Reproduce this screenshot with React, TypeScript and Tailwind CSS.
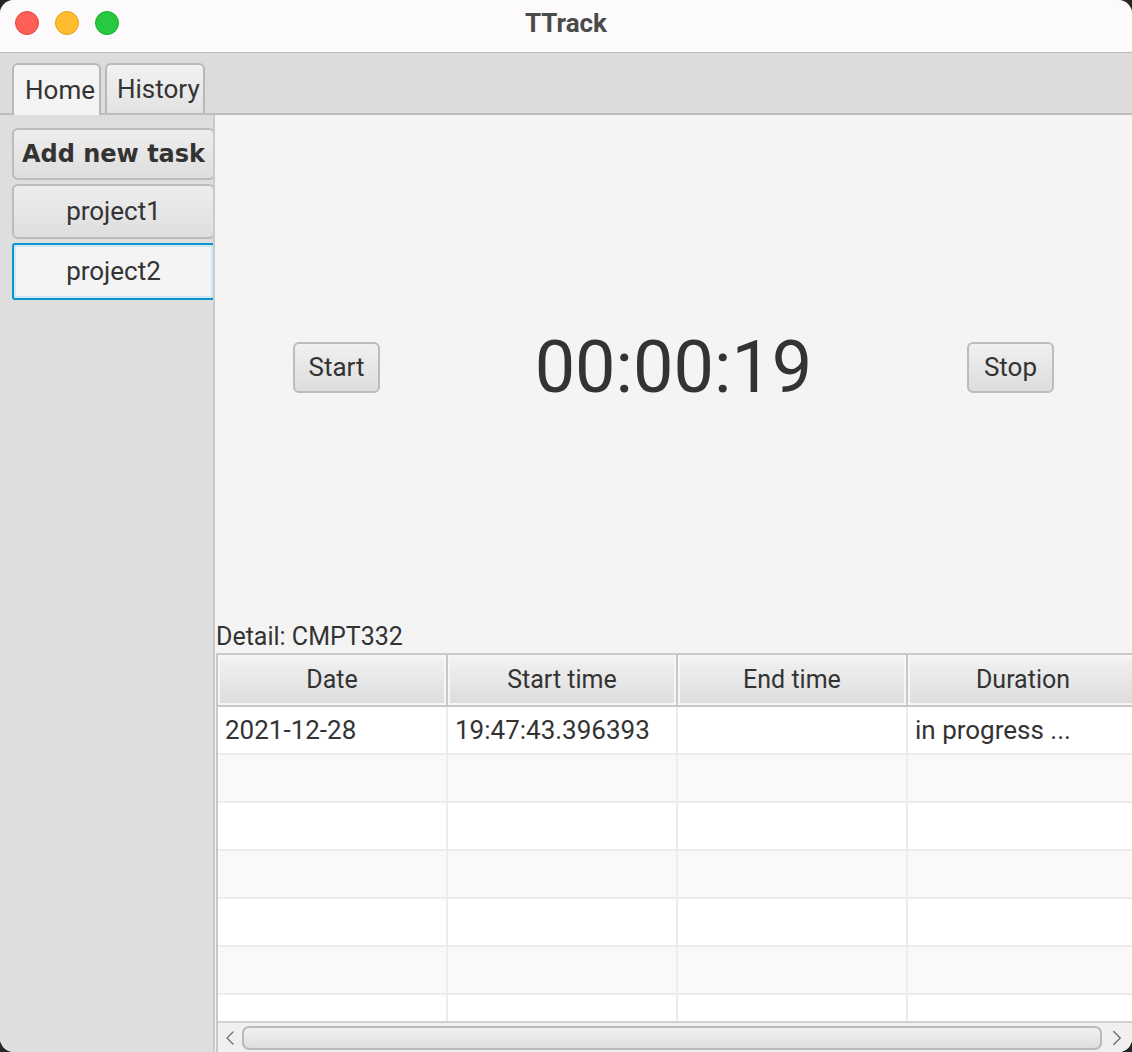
import { ChevronLeft, ChevronRight } from 'lucide-react'

const rows = [
  { date: '2021-12-28', start: '19:47:43.396393', end: '', duration: 'in progress ...' },
  { date: '', start: '', end: '', duration: '' },
  { date: '', start: '', end: '', duration: '' },
  { date: '', start: '', end: '', duration: '' },
  { date: '', start: '', end: '', duration: '' },
  { date: '', start: '', end: '', duration: '' },
  { date: '', start: '', end: '', duration: '' },
]

const columns = ['Date', 'Start time', 'End time', 'Duration']

export default function App() {
  return (
    <div className="w-[1132px] h-[1052px] bg-[#262626]" style={{ fontFamily: 'Roboto, "Liberation Sans", sans-serif' }}>
      <div className="w-full h-full rounded-[14px] overflow-hidden flex flex-col bg-[#dcdcdc] text-[#333]">

        {/* Title bar */}
        <div className="relative h-[53px] shrink-0 bg-[#fcfafb] border-b border-[#b9b9b9] flex items-center justify-center">
          <div className="absolute left-[15px] top-[11px] flex gap-4">
            <span className="w-6 h-6 rounded-full bg-[#fe5f57] border border-[#e2463f]" />
            <span className="w-6 h-6 rounded-full bg-[#febc2e] border border-[#e1a116]" />
            <span className="w-6 h-6 rounded-full bg-[#28c840] border border-[#17ad2b]" />
          </div>
          <span className="text-[26px] font-bold text-[#4a4a4a] leading-none -mt-[6px]">TTrack</span>
        </div>

        {/* Tab header */}
        <div className="h-[62px] shrink-0 bg-[#dcdcdc] border-b-2 border-[#bdbdbd] flex items-end pl-3 gap-1">
          <div className="w-[89px] h-[52px] -mb-[2px] rounded-t-[6px] border-2 border-b-0 border-[#b8b8b8] bg-[#f4f4f4] flex items-center pl-[11px] text-[26px]">
            Home
          </div>
          <div className="w-[100px] h-[50px] rounded-t-[6px] border-2 border-b-0 border-[#b8b8b8] bg-gradient-to-b from-[#f2f2f2] to-[#e2e2e2] flex items-center pl-[10px] text-[26px] overflow-hidden whitespace-nowrap">
            History
          </div>
        </div>

        {/* Body */}
        <div className="flex-1 flex min-h-0">

          {/* Sidebar */}
          <div className="w-[215px] shrink-0 bg-[#dedede] border-r-2 border-[#cbcbcb] overflow-hidden pt-[13px] pl-3 flex flex-col gap-1">
            <div className="w-[203px] h-[52px] shrink-0 rounded-[6px] border-2 border-[#bcbcbc] bg-gradient-to-b from-[#eeeeee] to-[#dedede] flex items-center justify-center text-[24px] font-bold whitespace-nowrap" style={{ fontFamily: '"DejaVu Sans", Verdana, sans-serif' }}>
              Add new task
            </div>
            <div className="w-[203px] h-[55px] shrink-0 rounded-[6px] border-2 border-[#bcbcbc] bg-gradient-to-b from-[#eeeeee] to-[#dedede] flex items-center justify-center text-[26px]">
              project1
            </div>
            <div className="w-[203px] h-[57px] shrink-0 rounded-[3px] border-2 border-[#0b96cf] bg-[#f4f4f4] flex items-center justify-center text-[26px] shadow-[inset_0_0_0_2px_#cfe8f3]">
              project2
            </div>
          </div>

          {/* Main */}
          <div className="flex-1 min-w-0 bg-[#f4f4f4] flex flex-col">
            <div className="flex-1 flex items-center justify-between px-[78px]">
              <button className="w-[87px] h-[51px] rounded-[6px] border-2 border-[#bcbcbc] bg-gradient-to-b from-[#f0f0f0] to-[#dddddd] text-[26px]">
                Start
              </button>
              <span className="text-[72px] leading-none">00:00:19</span>
              <button className="w-[87px] h-[51px] rounded-[6px] border-2 border-[#bcbcbc] bg-gradient-to-b from-[#f0f0f0] to-[#dddddd] text-[26px]">
                Stop
              </button>
            </div>

            <div className="h-[33px] shrink-0 flex items-end pl-[1px] text-[25px] leading-[32px]">Detail: CMPT332</div>

            {/* Table */}
            <div className="h-[399px] shrink-0 ml-[1px] border-l-2 border-t-2 border-[#c8c8c8] bg-white flex flex-col overflow-hidden">
              <div className="flex-1 overflow-hidden">
                <div className="w-[920px]">
                  <div className="grid grid-cols-[230px_230px_230px_230px] h-[52px] border-b-2 border-[#c8c8c8]">
                    {columns.map((c, i) => (
                      <div
                        key={c}
                        className={`flex items-center justify-center text-[25px] bg-gradient-to-b from-[#f3f3f3] to-[#dcdcdc] shadow-[inset_0_0_0_2px_#f6f6f6] ${i < 3 ? 'border-r-2 border-[#c8c8c8]' : ''}`}
                      >
                        {c}
                      </div>
                    ))}
                  </div>
                  {rows.map((r, ri) => (
                    <div
                      key={ri}
                      className={`grid grid-cols-[230px_230px_230px_230px] h-[48px] border-b-2 border-[#ececec] ${ri % 2 === 0 ? 'bg-white' : 'bg-[#f9f9f9]'}`}
                    >
                      {[r.date, r.start, r.end, r.duration].map((v, ci) => (
                        <div
                          key={ci}
                          className={`flex items-center pl-[7px] text-[26px] whitespace-nowrap ${ci < 3 ? 'border-r-2 border-[#ececec]' : ''}`}
                        >
                          {v}
                        </div>
                      ))}
                    </div>
                  ))}
                </div>
              </div>

              {/* Horizontal scrollbar */}
              <div className="h-[31px] shrink-0 border-t-2 border-[#d0d0d0] bg-[#f0f0f0] flex items-center">
                <div className="w-[24px] flex justify-center text-[#6e6e6e]">
                  <ChevronLeft size={26} strokeWidth={1.3} />
                </div>
                <div className="flex-1 h-[24px] rounded-[7px] border-2 border-[#bababa] bg-gradient-to-b from-[#f1f1f1] to-[#dedede]" />
                <div className="w-[30px] flex justify-center text-[#6e6e6e]">
                  <ChevronRight size={26} strokeWidth={1.3} />
                </div>
              </div>
            </div>
          </div>
        </div>
      </div>
    </div>
  )
}
